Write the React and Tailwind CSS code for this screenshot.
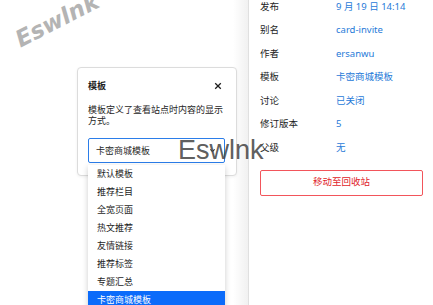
import React from "react";

const templates = [
  "默认模板",
  "推荐栏目",
  "全宽页面",
  "热文推荐",
  "友情链接",
  "推荐标签",
  "专题汇总",
  "卡密商城模板",
];

const meta = [
  ["发布", "9 月 19 日 14:14"],
  ["别名", "card-invite"],
  ["作者", "ersanwu"],
  ["模板", "卡密商城模板"],
  ["讨论", "已关闭"],
  ["修订版本", "5"],
  ["父级", "无"],
];

function TemplatePopover() {
  return (
    <div className="relative ml-[77px] mt-[67px] w-[160px] rounded-[4px] border border-[#dcdcdc] bg-white px-[10px] pb-[12px] pt-[12px] shadow-[0_1px_3px_rgba(0,0,0,0.06)]">
      <div className="flex h-[12px] items-center justify-between">
        <span className="text-[9px] font-semibold text-[#1e1e1e]">模板</span>
        <svg className="mr-[4px] h-[8px] w-[8px]" viewBox="0 0 10 10" fill="none" stroke="#1e1e1e" strokeWidth="1.6">
          <path d="M1.5 1.5l7 7M8.5 1.5l-7 7" />
        </svg>
      </div>
      <p className="mt-[13px] pr-[2px] text-[9px] leading-[10.5px] text-[#1e1e1e]">
        模板定义了查看站点时内容的显示方式。
      </p>
      <div className="relative mt-[12px]">
        <div className="flex h-[25px] w-[137px] items-center justify-between rounded-[2px] border border-[#2b7de9] pl-[7px] pr-[8px]">
          <span className="text-[9px] text-[#1e1e1e]">卡密商城模板</span>
          <svg className="h-[7px] w-[7px]" viewBox="0 0 10 10" fill="none" stroke="#1e1e1e" strokeWidth="1.6">
            <path d="M2 3.5l3 3 3-3" />
          </svg>
        </div>
        <ul className="absolute left-0 top-[27px] z-10 w-[137px] bg-white shadow-[0_2px_6px_rgba(0,0,0,0.2)]">
          {templates.map((t, i) => (
            <li
              key={t}
              className={
                i === templates.length - 1
                  ? "h-[18px] bg-[#0b6bfa] pl-[9px] text-[9px] leading-[18px] text-white"
                  : "h-[18px] pl-[9px] text-[9px] leading-[18px] text-[#1e1e1e]"
              }
            >
              {t}
            </li>
          ))}
        </ul>
      </div>
    </div>
  );
}

export default function App() {
  return (
    <div
      className="relative flex h-[305px] w-[433px] overflow-hidden bg-white"
      style={{ fontFamily: '"Noto Sans", "Noto Sans CJK SC", sans-serif' }}
    >
      <div className="relative w-[248px] shrink-0 bg-gradient-to-r from-white from-[94%] to-[#f1f1f1]">
        <TemplatePopover />
      </div>

      <div className="flex w-[185px] flex-col border-l border-[#e0e0e0] pl-[11px] pr-[9px]">
        <div className="mt-[-5px] flex flex-col">
          {meta.map(([k, v]) => (
            <div key={k} className="flex h-[23.5px] items-center text-[9.5px]">
              <span className="w-[76px] text-[#1e1e1e]">{k}</span>
              <span className="text-[#1f7ad8]">{v}</span>
            </div>
          ))}
        </div>
        <button className="mt-[10px] h-[26px] w-[163px] rounded-[2px] border-[1.5px] border-[#f2555b] text-[9.5px] text-[#e0242a]">
          移动至回收站
        </button>
      </div>

      <span
        className="pointer-events-none absolute left-[12px] top-[3px] rotate-[-27deg] text-[23px] font-bold italic text-[#b4b4b4]"
        style={{ fontFamily: '"DejaVu Sans", sans-serif' }}
      >
        Eswlnk
      </span>
      <span
        className="pointer-events-none absolute left-[178px] top-[134px] z-20 text-[27px] leading-[32px] text-[#4a4a4a]/90"
        style={{ fontFamily: '"Liberation Sans", Arial, sans-serif' }}
      >
        Eswlnk
      </span>
    </div>
  );
}
